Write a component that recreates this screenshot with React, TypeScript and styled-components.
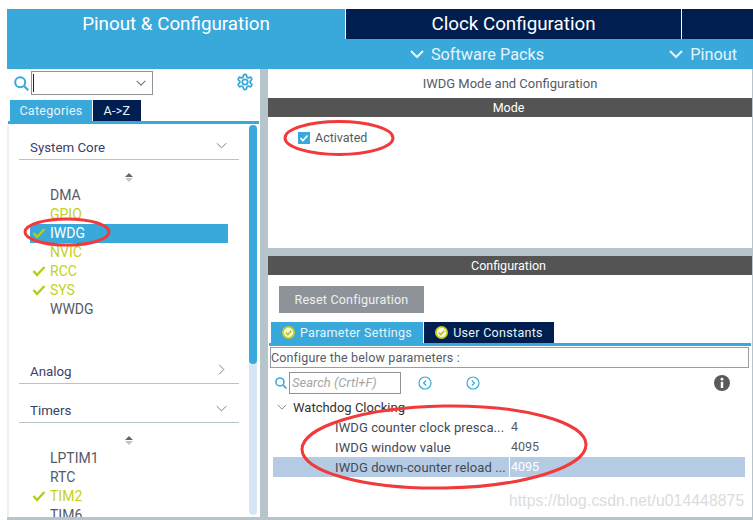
import * as React from 'react';
import styled, { createGlobalStyle } from 'styled-components';

const navy = '#001f50';
const blue = '#39a9dc';
const split = '#b8c4cc';
const lime = '#c4d21a';

const Global = createGlobalStyle`
  html, body { margin: 0; padding: 0; background: #fff; }
  body { font-family: Roboto, "Liberation Sans", sans-serif; color: #555b66; }
  * { box-sizing: border-box; }
`;

const Page = styled.div`
  position: relative;
  width: 753px;
  height: 520px;
  overflow: hidden;
  padding: 9px 0 0 7px;
  display: flex;
  flex-direction: column;
`;

const TopTabs = styled.div`
  display: flex;
  height: 30px;
  gap: 1px;
  background: #fff;
`;

const TopTab = styled.div<{ $active?: boolean; $w: number }>`
  width: ${(p) => p.$w}px;
  flex: ${(p) => (p.$w ? 'none' : '1')};
  background: ${(p) => (p.$active ? blue : navy)};
  color: #fff;
  font-size: 18.8px;
  line-height: 30px;
  text-align: center;
`;

const SubBar = styled.div`
  display: flex;
  justify-content: flex-end;
  align-items: center;
  height: 30px;
  gap: 125px;
  padding-right: 16px;
  background: ${blue};
`;

const SubItem = styled.div`
  display: flex;
  align-items: center;
  gap: 7px;
  color: #e6f4fb;
  font-size: 16.3px;
`;

const Body = styled.div`
  display: flex;
  height: 448px;
`;

const Side = styled.div`
  width: 253px;
  display: flex;
  flex-direction: column;
`;

const SearchRow = styled.div`
  display: flex;
  align-items: flex-start;
  height: 31px;
  padding: 2px 6px 0 7px;
`;

const SearchGlass = styled.svg`
  width: 15px;
  height: 15px;
  margin: 5px 2px 0 0;
  flex: none;
`;

const Combo = styled.div`
  width: 122px;
  height: 24px;
  border: 1px solid #8f9499;
  display: flex;
  align-items: center;
  justify-content: flex-end;
  padding-right: 6px;
  position: relative;
  &::before {
    content: '';
    position: absolute;
    left: 1px;
    top: 2px;
    bottom: 2px;
    width: 1px;
    background: #222;
  }
`;

const Gear = styled.svg`
  width: 18px;
  height: 18px;
  margin: 2px 0 0 auto;
  flex: none;
`;

const TabRow = styled.div`
  display: flex;
  gap: 1px;
  height: 21px;
  padding-left: 3px;
`;

const SmallTab = styled.div<{ $active?: boolean; $w: number }>`
  width: ${(p) => p.$w}px;
  background: ${(p) => (p.$active ? blue : navy)};
  color: #e8f4fb;
  font-size: 12.5px;
  letter-spacing: 0.3px;
  line-height: 21px;
  text-align: center;
`;

const BlueRule = styled.div`
  height: 3px;
  flex: none;
  background: ${blue};
  margin: 0 1px;
`;

const Panel = styled.div`
  flex: 1;
  min-height: 0;
  display: flex;
  border-left: 2px solid #eef0f2;
  padding-right: 3px;
`;

const List = styled.div`
  flex: 1;
  overflow: hidden;
  padding: 12px 10px 0 10px;
`;

const Track = styled.div`
  width: 8px;
  height: 390px;
  margin-top: 1px;
  border-radius: 4px;
  background: #d7e6f4;
  flex: none;
`;

const Thumb = styled.div`
  height: 239px;
  border-radius: 4px;
  background: ${blue};
`;

const Group = styled.div<{ $gap: number }>`
  display: flex;
  align-items: center;
  justify-content: space-between;
  height: 24px;
  margin-top: ${(p) => p.$gap}px;
  border-bottom: 1px solid ${split};
  padding: 0 12px 0 11px;
  color: #39406a;
  font-size: 13.3px;
  svg { margin-bottom: 4px; }
`;

const Sort = styled.div`
  height: 26px;
  display: flex;
  flex-direction: column;
  align-items: center;
  gap: 1px;
  padding: 13px 0 0 0;
  &::before,
  &::after {
    content: '';
    border-left: 4px solid transparent;
    border-right: 4px solid transparent;
  }
  &::before { border-bottom: 4px solid #666; }
  &::after { border-top: 4px solid #c4c4c4; }
`;

const Item = styled.div<{ $on?: boolean; $sel?: boolean }>`
  display: flex;
  align-items: center;
  height: 19px;
  margin: 0 11px;
  padding: 0 0 1px 2px;
  font-size: 14px;
  background: ${(p) => (p.$sel ? blue : 'transparent')};
  color: ${(p) => (p.$sel ? '#fff' : p.$on ? lime : '#555b66')};
`;

const Tick = styled.svg`
  width: 14px;
  height: 14px;
  margin-right: 4px;
  flex: none;
`;

const TickGap = styled.span`
  width: 18px;
  flex: none;
`;

const VSplit = styled.div`
  width: 8px;
  flex: none;
  background: ${split};
`;

const Main = styled.div`
  flex: 1;
  display: flex;
  flex-direction: column;
  border-right: 1px solid ${split};
`;

const ModeArea = styled.div`
  height: 179px;
  flex: none;
`;

const Title = styled.div`
  height: 29px;
  text-align: center;
  line-height: 29px;
  font-size: 13px;
`;

const Bar = styled.div`
  height: 19px;
  padding-right: 3px;
  background: #535453;
  color: #fff;
  font-size: 12.5px;
  line-height: 19px;
  text-align: center;
`;

const CheckRow = styled.div`
  display: flex;
  align-items: center;
  gap: 5px;
  padding: 13px 0 0 30px;
  font-size: 12.5px;
`;

const Box = styled.span`
  width: 12px;
  height: 12px;
  background: ${blue};
  display: flex;
  align-items: center;
  justify-content: center;
`;

const HSplit = styled.div`
  height: 8px;
  flex: none;
  background: ${split};
`;

const Config = styled.div`
  flex: 1;
  display: flex;
  flex-direction: column;
`;

const ResetButton = styled.button`
  align-self: flex-start;
  width: 145px;
  height: 27px;
  margin: 11px 0 9px 11px;
  border: 0;
  background: #8e9399;
  color: #eef0f2;
  font-family: inherit;
  font-size: 12.5px;
  letter-spacing: 0.2px;
`;

const ParamTabs = styled.div`
  display: flex;
  gap: 1px;
  height: 21px;
  padding-left: 3px;
`;

const ParamTab = styled.div<{ $active?: boolean; $w: number }>`
  display: flex;
  align-items: center;
  justify-content: center;
  gap: 5px;
  width: ${(p) => p.$w}px;
  background: ${(p) => (p.$active ? blue : navy)};
  color: #e8f4fb;
  font-size: 12.5px;
  letter-spacing: 0.3px;
`;

const Badge = styled.svg`
  width: 13px;
  height: 13px;
  flex: none;
`;

const HintBox = styled.div`
  height: 21px;
  margin: 1px 3px 0 2px;
  border: 1px solid #9a9ea3;
  font-size: 12.5px;
  line-height: 19px;
  letter-spacing: 0.15px;
`;

const FindRow = styled.div`
  display: flex;
  align-items: center;
  height: 22px;
  margin-top: 4px;
  padding-left: 7px;
`;

const FindGlass = styled.svg`
  width: 12px;
  height: 12px;
  margin-right: 2px;
  flex: none;
`;

const FindInput = styled.div`
  width: 112px;
  height: 22px;
  border: 1px solid #8f9499;
  padding-left: 2px;
  color: #a4a6a8;
  font-size: 13px;
  font-style: italic;
  line-height: 20px;
`;

const RoundNav = styled.svg<{ $ml: number }>`
  width: 14px;
  height: 14px;
  margin-left: ${(p) => p.$ml}px;
  flex: none;
`;

const InfoIcon = styled.svg`
  width: 16px;
  height: 16px;
  margin-left: 234px;
  flex: none;
`;

const TreeHead = styled.div`
  display: flex;
  align-items: center;
  gap: 6px;
  height: 20px;
  margin-top: 3px;
  padding-left: 9px;
  color: #333;
  font-size: 13px;
`;

const ParamRow = styled.div<{ $sel?: boolean }>`
  display: grid;
  grid-template-columns: 236px 1fr;
  height: 20px;
  margin: 0 7px 0 5px;
  align-items: center;
  font-size: 13px;
  background: ${(p) => (p.$sel ? '#b5cbe3' : 'transparent')};
  color: #444a55;
`;

const ParamName = styled.div`
  padding-left: 62px;
  white-space: nowrap;
  letter-spacing: 0.1px;
`;

const ParamValue = styled.div<{ $sel?: boolean }>`
  height: 100%;
  font-size: 12.5px;
  line-height: 20px;
  padding-left: 1px;
  border-left: 1px solid ${(p) => (p.$sel ? '#fff' : 'transparent')};
  color: ${(p) => (p.$sel ? '#fff' : '#555b66')};
`;

const BottomEdge = styled.div`
  height: 3px;
  flex: none;
  background: ${split};
`;

const Watermark = styled.div`
  position: absolute;
  left: 509px;
  top: 492px;
  color: #dcdcdc;
  font-family: "Liberation Sans", sans-serif;
  font-size: 15.7px;
  letter-spacing: 0.1px;
`;

const Marks = styled.svg`
  position: absolute;
  left: 0;
  top: 0;
  pointer-events: none;
`;

const Chevron = ({ size = 14, color = '#e6f4fb', width = 2, dir = 'down' }: { size?: number; color?: string; width?: number; dir?: 'down' | 'right' }) => (
  <svg width={size} height={size} viewBox="0 0 14 14" fill="none" stroke={color} strokeWidth={width}>
    <path d={dir === 'down' ? 'M1 4l6 6 6-6' : 'M4 1l6 6-6 6'} />
  </svg>
);

const CheckMark = () => (
  <Tick viewBox="0 0 14 14" fill="none" stroke="#b9cc14" strokeWidth="2.4">
    <path d="M1.5 7l3.5 4 7.5-8" />
  </Tick>
);

const TabBadge = () => (
  <Badge viewBox="0 0 13 13">
    <circle cx="6.5" cy="6.5" r="6.5" fill="#c4d21a" />
    <circle cx="6.5" cy="6.5" r="4.7" fill="#f4f6e0" />
    <path d="M3.8 6.6l2 2 3.5-3.8" fill="none" stroke="#b4c414" strokeWidth="1.5" />
  </Badge>
);

const GlassPath = () => (
  <>
    <circle cx="6.2" cy="6.2" r="5" fill="none" stroke={blue} strokeWidth="2" />
    <path d="M10 10l4.3 4.3" stroke={blue} strokeWidth="2.2" />
  </>
);

const ItemRow = ({ name, on, sel, tick }: { name: string; on?: boolean; sel?: boolean; tick?: boolean }) => (
  <Item $on={on} $sel={sel}>
    {tick ? <CheckMark /> : <TickGap />}
    {name}
  </Item>
);

export default function App() {
  return (
    <Page>
      <Global />
      <TopTabs>
        <TopTab $active $w={338}>Pinout &amp; Configuration</TopTab>
        <TopTab $w={335}>Clock Configuration</TopTab>
        <TopTab $w={0} />
      </TopTabs>
      <SubBar>
        <SubItem><Chevron />Software Packs</SubItem>
        <SubItem><Chevron />Pinout</SubItem>
      </SubBar>
      <Body>
        <Side>
          <SearchRow>
            <SearchGlass viewBox="0 0 15 15"><GlassPath /></SearchGlass>
            <Combo><Chevron size={10} color="#777" width={1.6} /></Combo>
            <Gear viewBox="0 0 24 24" fill="none" stroke={blue} strokeWidth="2.4" strokeLinecap="round" strokeLinejoin="round">
              <path d="M12.22 2h-.44a2 2 0 0 0-2 2v.18a2 2 0 0 1-1 1.73l-.43.25a2 2 0 0 1-2 0l-.15-.08a2 2 0 0 0-2.73.73l-.22.38a2 2 0 0 0 .73 2.73l.15.1a2 2 0 0 1 1 1.72v.51a2 2 0 0 1-1 1.74l-.15.09a2 2 0 0 0-.73 2.73l.22.38a2 2 0 0 0 2.73.73l.15-.08a2 2 0 0 1 2 0l.43.25a2 2 0 0 1 1 1.73V20a2 2 0 0 0 2 2h.44a2 2 0 0 0 2-2v-.18a2 2 0 0 1 1-1.73l.43-.25a2 2 0 0 1 2 0l.15.08a2 2 0 0 0 2.73-.73l.22-.39a2 2 0 0 0-.73-2.73l-.15-.08a2 2 0 0 1-1-1.74v-.5a2 2 0 0 1 1-1.74l.15-.09a2 2 0 0 0 .73-2.73l-.22-.38a2 2 0 0 0-2.73-.73l-.15.08a2 2 0 0 1-2 0l-.43-.25a2 2 0 0 1-1-1.73V4a2 2 0 0 0-2-2z" />
              <circle cx="12" cy="12" r="3.6" />
            </Gear>
          </SearchRow>
          <TabRow>
            <SmallTab $active $w={82}>Categories</SmallTab>
            <SmallTab $w={48}>A-&gt;Z</SmallTab>
          </TabRow>
          <BlueRule />
          <Panel>
            <List>
              <Group $gap={0}>System Core<Chevron size={11} color="#777" width={1.2} /></Group>
              <Sort />
              <ItemRow name="DMA" />
              <ItemRow name="GPIO" on />
              <ItemRow name="IWDG" sel tick />
              <ItemRow name="NVIC" on />
              <ItemRow name="RCC" on tick />
              <ItemRow name="SYS" on tick />
              <ItemRow name="WWDG" />
              <Group $gap={41}>Analog<Chevron size={11} color="#777" width={1.2} dir="right" /></Group>
              <Group $gap={15}>Timers<Chevron size={11} color="#777" width={1.2} /></Group>
              <Sort />
              <ItemRow name="LPTIM1" />
              <ItemRow name="RTC" />
              <ItemRow name="TIM2" on tick />
              <ItemRow name="TIM6" />
            </List>
            <Track><Thumb /></Track>
          </Panel>
        </Side>
        <VSplit />
        <Main>
          <ModeArea>
            <Title>IWDG Mode and Configuration</Title>
            <Bar>Mode</Bar>
            <CheckRow>
              <Box>
                <svg width="10" height="10" viewBox="0 0 10 10" fill="none" stroke="#fff" strokeWidth="1.6">
                  <path d="M1.5 5l2.5 2.5L8.5 2.5" />
                </svg>
              </Box>
              Activated
            </CheckRow>
          </ModeArea>
          <HSplit />
          <Config>
            <Bar>Configuration</Bar>
            <ResetButton>Reset Configuration</ResetButton>
            <ParamTabs>
              <ParamTab $active $w={152}><TabBadge />Parameter Settings</ParamTab>
              <ParamTab $w={130}><TabBadge />User Constants</ParamTab>
            </ParamTabs>
            <BlueRule />
            <HintBox>Configure the below parameters :</HintBox>
            <FindRow>
              <FindGlass viewBox="0 0 15 15"><GlassPath /></FindGlass>
              <FindInput>Search (Crtl+F)</FindInput>
              <RoundNav $ml={17} viewBox="0 0 14 14" fill="none" stroke={blue} strokeWidth="1.2">
                <circle cx="7" cy="7" r="6" />
                <path d="M8.2 4.5L5.6 7l2.6 2.5" />
              </RoundNav>
              <RoundNav $ml={34} viewBox="0 0 14 14" fill="none" stroke={blue} strokeWidth="1.2">
                <circle cx="7" cy="7" r="6" />
                <path d="M5.8 4.5L8.4 7l-2.6 2.5" />
              </RoundNav>
              <InfoIcon viewBox="0 0 16 16">
                <circle cx="8" cy="8" r="8" fill="#5a5a5a" />
                <circle cx="8" cy="4.2" r="1.4" fill="#fff" />
                <rect x="6.8" y="6.8" width="2.4" height="6.2" fill="#fff" />
              </InfoIcon>
            </FindRow>
            <TreeHead><Chevron size={10} color="#777" width={1.2} />Watchdog Clocking</TreeHead>
            <ParamRow><ParamName>IWDG counter clock presca...</ParamName><ParamValue>4</ParamValue></ParamRow>
            <ParamRow><ParamName>IWDG window value</ParamName><ParamValue>4095</ParamValue></ParamRow>
            <ParamRow $sel><ParamName>IWDG down-counter reload ...</ParamName><ParamValue $sel>4095</ParamValue></ParamRow>
          </Config>
        </Main>
      </Body>
      <BottomEdge />
      <Watermark>https://blog.csdn.net/u014448875</Watermark>
      <Marks width="753" height="520" viewBox="0 0 753 520" fill="none" stroke="#f23a3a" strokeWidth="3">
        <ellipse cx="67" cy="232" rx="42" ry="13" />
        <ellipse cx="339" cy="138" rx="54" ry="16.5" />
        <ellipse cx="444" cy="447" rx="142" ry="41" transform="rotate(-1 444 447)" />
      </Marks>
    </Page>
  );
}
